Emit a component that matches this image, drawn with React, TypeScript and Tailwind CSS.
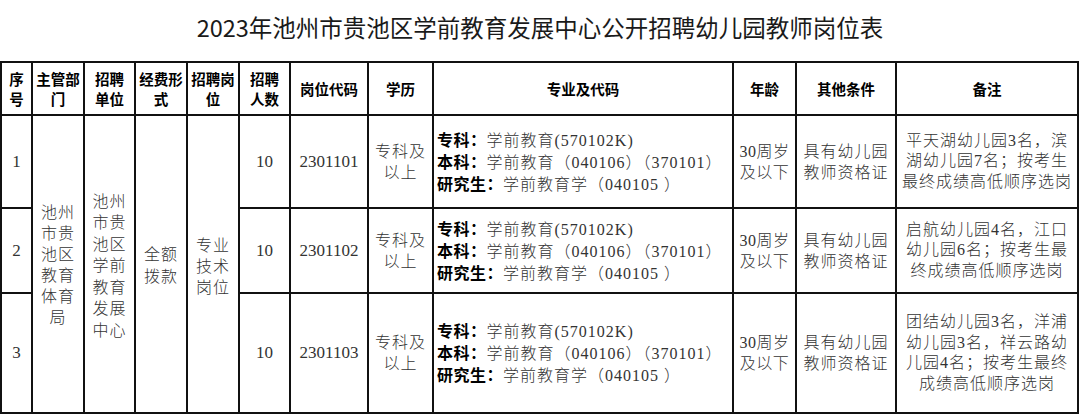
import React from 'react';

const serif = "font-['Liberation_Serif','Noto_Sans_CJK_SC',serif]";

const rows = [
  {
    no: '1',
    code: '2301101',
    note: ['平天湖幼儿园3名，滨', '湖幼儿园7名；按考生', '最终成绩高低顺序选岗'],
  },
  {
    no: '2',
    code: '2301102',
    note: ['启航幼儿园4名，江口', '幼儿园6名；按考生最', '终成绩高低顺序选岗'],
  },
  {
    no: '3',
    code: '2301103',
    note: ['团结幼儿园3名，洋浦', '幼儿园3名，祥云路幼', '儿园4名；按考生最终', '成绩高低顺序选岗'],
  },
];

const headers = [
  ['序', '号'],
  ['主管部', '门'],
  ['招聘', '单位'],
  ['经费形', '式'],
  ['招聘岗', '位'],
  ['招聘', '人数'],
  ['岗位代码'],
  ['学历'],
  ['专业及代码'],
  ['年龄'],
  ['其他条件'],
  ['备注'],
];

// stacked text, one entry per line
const Lines = ({ lines, className = '' }: { lines: string[]; className?: string }) => (
  <div className={className}>
    {lines.map((l, i) => (
      <div key={i} className="whitespace-nowrap">
        {l}
      </div>
    ))}
  </div>
);

const Label = ({ children }: { children: React.ReactNode }) => (
  <span className="font-['Noto_Sans_CJK_SC',sans-serif] font-bold text-black tracking-[0.5px]">{children}</span>
);

const cell = 'bg-white flex items-center justify-center text-center';

export default function App() {
  return (
    <div className="w-[1080px] h-[415px] bg-white overflow-hidden">
      <div className="h-[61px] pt-[10px] text-center font-['Noto_Sans_CJK_SC',sans-serif] text-[23.5px] leading-[34px] text-[#1a1a1a]">
        2023年池州市贵池区学前教育发展中心公开招聘幼儿园教师岗位表
      </div>

      <div className="grid w-[1079px] grid-cols-[29px_50px_49px_50px_50px_49px_76px_63px_298px_61px_98px_180px] grid-rows-[51px_91px_83px_118px] gap-[2px] border-2 border-[#111] bg-[#111]">
        {headers.map((h, i) => (
          <div
            key={i}
            className={`${cell} font-['Noto_Sans_CJK_SC',sans-serif] font-bold text-[14.5px] leading-[20px] text-black`}
          >
            <Lines lines={h} />
          </div>
        ))}

        {rows.map((r, i) => (
          <React.Fragment key={r.no}>
            <div className={`${cell} ${serif} text-[17px] text-[#333]`}>{r.no}</div>
            {i === 0 && (
              <>
                <div className={`${cell} row-span-3 ${serif} font-light text-[16px] leading-[21px] tracking-[1px] text-[#333] pt-[2px]`}>
                  <Lines lines={['池州', '市贵', '池区', '教育', '体育', '局']} />
                </div>
                <div className={`${cell} row-span-3 ${serif} font-light text-[16px] leading-[21.5px] tracking-[1px] text-[#333] pt-[4px]`}>
                  <Lines lines={['池州', '市贵', '池区', '学前', '教育', '发展', '中心']} />
                </div>
                <div className={`${cell} row-span-3 ${serif} font-light text-[16px] leading-[22px] tracking-[1px] text-[#333] pt-[4px]`}>
                  <Lines lines={['全额', '拨款']} />
                </div>
                <div className={`${cell} row-span-3 ${serif} font-light text-[16px] leading-[21px] tracking-[1px] text-[#333] pt-[4px]`}>
                  <Lines lines={['专业', '技术', '岗位']} />
                </div>
              </>
            )}
            <div className={`${cell} ${serif} text-[17px] text-[#333]`}>10</div>
            <div className={`${cell} ${serif} text-[17px] text-[#333]`}>{r.code}</div>
            <div className={`${cell} ${serif} font-light text-[16px] leading-[21px] tracking-[1px] text-[#333]`}>
              <Lines lines={['专科及', '以上']} />
            </div>
            <div className={`bg-white flex flex-col justify-center pl-[3px] ${serif} font-light text-[16px] leading-[20px] tracking-[1px] text-[#333] whitespace-nowrap`}>
              <div>
                <Label>专科：</Label>学前教育(570102K)
              </div>
              <div>
                <Label>本科：</Label>学前教育（040106）（370101）
              </div>
              <div>
                <Label>研究生：</Label>学前教育学（040105 ）
              </div>
            </div>
            <div className={`${cell} ${serif} font-light text-[16px] leading-[21px] tracking-[0.5px] text-[#333]`}>
              <Lines lines={['30周岁', '及以下']} />
            </div>
            <div className={`${cell} ${serif} font-light text-[16px] leading-[21px] tracking-[1px] text-[#333]`}>
              <Lines lines={['具有幼儿园', '教师资格证']} />
            </div>
            <div className={`${cell} ${serif} font-light text-[16px] leading-[20.5px] tracking-[1px] text-[#333]`}>
              <Lines lines={r.note} />
            </div>
          </React.Fragment>
        ))}
      </div>
    </div>
  );
}
